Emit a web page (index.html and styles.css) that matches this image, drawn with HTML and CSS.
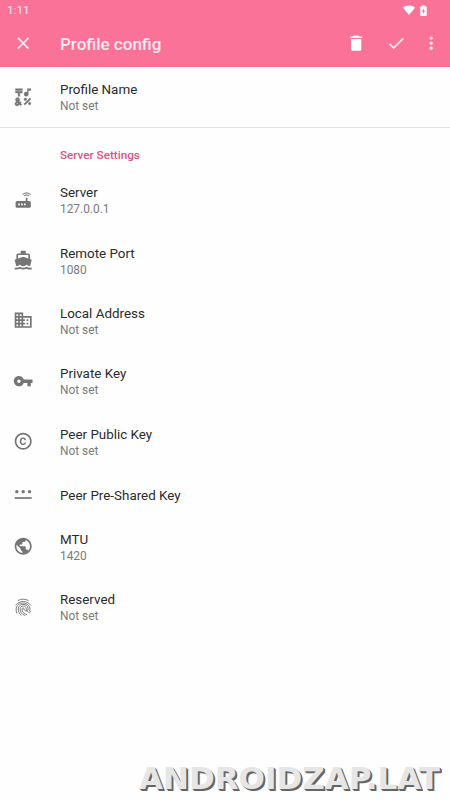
FILE: index.html
```html
<!DOCTYPE html>
<html lang="en">
<head>
<meta charset="utf-8">
<title>Profile config</title>
<link rel="stylesheet" href="styles.css">
</head>
<body>
<header class="top">
  <div class="status">
    <span class="clock">1:11</span>
    <svg class="wifi" viewBox="0 0 24 24"><path d="M12 22 0 7.500C3 4.500 7 3 12 3s9 1.500 12 4.500z"/></svg>
    <svg class="battery" viewBox="0 0 24 24"><path d="M15.670 4H14V2h-4v2H8.330C7.100 4 6 4.600 6 5.330v15.330C6 21.400 7.100 22 8.330 22h7.330c1.240 0 2.340-.600 2.340-1.330V5.330C18 4.600 16.900 4 15.670 4zM11 19v-4.500H9L13 8v4.500h2L11 19z"/></svg>
  </div>
  <div class="toolbar">
    <svg class="icon close" viewBox="0 0 24 24"><path d="M19 6.410 17.590 5 12 10.590 6.410 5 5 6.410 10.590 12 5 17.590 6.410 19 12 13.410 17.590 19 19 17.590 13.410 12z"/></svg>
    <h1>Profile config</h1>
    <svg class="icon trash" viewBox="0 0 24 24"><path d="M6 19c0 1.100.9 2 2 2h8c1.100 0 2-.9 2-2V7H6v12zM19 4h-3.500l-1-1h-5l-1 1H5v2h14V4z"/></svg>
    <svg class="icon check" viewBox="0 0 24 24"><path d="M9 16.170 4.830 12l-1.420 1.410L9 19 21 7l-1.410-1.410z"/></svg>
    <svg class="icon more" viewBox="0 0 24 24"><path d="M12 8c1.100 0 2-.9 2-2s-.9-2-2-2-2 .9-2 2 .9 2 2 2zm0 2c-1.100 0-2 .9-2 2s.9 2 2 2 2-.9 2-2-.9-2-2-2zm0 6c-1.100 0-2 .9-2 2s.9 2 2 2 2-.9 2-2-.9-2-2-2z"/></svg>
  </div>
</header>
<main>
  <section class="profile">
    <div class="row">
      <svg class="icon symbols" viewBox="0 0 24 24"><path d="M3 2h8v2H3zM3 5h8v2H8v4H6V7H3zM15.500 11c1.380 0 2.500-1.120 2.500-2.500V4h3V2h-4v4.510c-.420-.320-.930-.510-1.500-.510a2.500 2.500 0 0 0 0 5z"/><path d="m12.700 19.900 7.070-7.070 1.420 1.410-7.070 7.070z"/><circle cx="14.500" cy="14.500" r="1.500"/><circle cx="19.500" cy="19.500" r="1.500"/><path d="m9.740 18.430-1.410-1.410-.710.710-.740-.740.350-.350c.980-.980.980-2.560 0-3.540-.490-.490-1.130-.730-1.770-.730s-1.280.240-1.770.730c-.980.980-.980 2.560 0 3.540l.350.350-1.060 1.060c-.980.980-.980 2.560 0 3.540.5.490 1.140.730 1.780.730s1.280-.240 1.770-.730l1.060-1.060 1.410 1.410 1.410-1.410-1.410-1.410zM5.110 14.050c.05-.050.170-.150.350-.150s.300.100.350.150c.190.190.190.510 0 .710l-.350.350-.350-.350c-.190-.200-.190-.520 0-.710zm.350 5.780-.350.350c-.050.050-.170.150-.350.150s-.300-.100-.350-.150c-.190-.190-.190-.510 0-.710l1.060-1.060.740.740z"/></svg>
      <div class="text"><h2>Profile Name</h2><p>Not set</p></div>
    </div>
  </section>
  <section class="settings">
    <h3>Server Settings</h3>
    <div class="row">
      <svg class="icon" viewBox="0 0 24 24"><path d="m20.200 5.900.8-.8C19.600 3.700 17.800 3 16 3s-3.600.7-5 2.100l.8.800C13 4.800 14.500 4.200 16 4.200s3 .6 4.200 1.700zm-.9.800c-.9-.9-2.100-1.400-3.300-1.400s-2.400.5-3.300 1.400l.8.800c.7-.7 1.600-1 2.500-1s1.800.3 2.500 1zM19 13h-2V9h-2v4H5c-1.100 0-2 .9-2 2v4c0 1.100.9 2 2 2h14c1.100 0 2-.9 2-2v-4c0-1.100-.9-2-2-2zM8 18H6v-2h2zm3.500 0h-2v-2h2zm3.500 0h-2v-2h2z"/></svg>
      <div class="text"><h2>Server</h2><p>127.0.0.1</p></div>
    </div>
    <div class="row">
      <svg class="icon" viewBox="0 0 24 24"><path d="M20 21c-1.390 0-2.780-.470-4-1.320-2.440 1.710-5.560 1.710-8 0C6.780 20.530 5.390 21 4 21H2v2h2c1.380 0 2.740-.350 4-.990 2.520 1.290 5.480 1.290 8 0 1.260.650 2.620.990 4 .990h2v-2zM3.950 19H4c1.600 0 3.020-.880 4-2 .980 1.120 2.400 2 4 2s3.020-.880 4-2c.980 1.120 2.400 2 4 2h.050l1.890-6.680c.080-.260.060-.540-.060-.780s-.340-.420-.600-.500L20 10.620V6c0-1.100-.9-2-2-2h-3V1H9v3H6c-1.100 0-2 .9-2 2v4.620l-1.290.420c-.260.080-.480.260-.600.500s-.150.520-.060.780zM6 6h12v3.970L12 8 6 9.970z"/></svg>
      <div class="text"><h2>Remote Port</h2><p>1080</p></div>
    </div>
    <div class="row">
      <svg class="icon" viewBox="0 0 24 24"><path d="M12 7V3H2v18h20V7zM6 19H4v-2h2zm0-4H4v-2h2zm0-4H4V9h2zm0-4H4V5h2zm4 12H8v-2h2zm0-4H8v-2h2zm0-4H8V9h2zm0-4H8V5h2zm10 12h-8v-2h2v-2h-2v-2h2v-2h-2V9h8zm-2-8h-2v2h2zm0 4h-2v2h2z"/></svg>
      <div class="text"><h2>Local Address</h2><p>Not set</p></div>
    </div>
    <div class="row">
      <svg class="icon" viewBox="0 0 24 24"><path d="M12.650 10C11.830 7.670 9.610 6 7 6c-3.310 0-6 2.690-6 6s2.690 6 6 6c2.610 0 4.830-1.670 5.650-4H17v4h4v-4h2v-4zM7 14c-1.100 0-2-.9-2-2s.9-2 2-2 2 .9 2 2-.9 2-2 2z"/></svg>
      <div class="text"><h2>Private Key</h2><p>Not set</p></div>
    </div>
    <div class="row">
      <svg class="icon" viewBox="0 0 24 24"><path d="M10.080 10.860c.050-.330.160-.620.300-.870s.340-.460.590-.620c.240-.150.540-.220.910-.230.230.010.440.050.630.130.200.090.380.210.520.360s.250.330.340.530.130.420.140.640h1.790c-.020-.470-.110-.9-.280-1.290s-.4-.730-.7-1.010-.660-.5-1.080-.660-.880-.230-1.390-.230c-.650 0-1.220.110-1.700.340s-.880.530-1.200.920-.560.840-.710 1.360S8 11.290 8 11.870v.270c0 .580.080 1.120.230 1.640s.390.970.710 1.350.720.690 1.200.910c.480.220 1.050.340 1.700.340.470 0 .910-.080 1.320-.230s.770-.360 1.080-.630.560-.580.740-.940.290-.740.300-1.150h-1.790c-.010.210-.060.400-.150.580s-.210.330-.360.460-.320.230-.520.300c-.190.070-.390.090-.6.100-.360-.010-.660-.080-.890-.230-.250-.160-.450-.370-.590-.620s-.250-.550-.300-.880-.080-.670-.080-1v-.270c0-.350.030-.680.080-1.010zM12 2C6.480 2 2 6.480 2 12s4.480 10 10 10 10-4.480 10-10S17.520 2 12 2zm0 18c-4.410 0-8-3.590-8-8s3.590-8 8-8 8 3.590 8 8-3.590 8-8 8z"/></svg>
      <div class="text"><h2>Peer Public Key</h2><p>Not set</p></div>
    </div>
    <div class="row single">
      <svg class="icon" viewBox="0 0 24 24"><path d="M2 15.500h20v2H2z"/><circle cx="4.500" cy="9" r="2"/><circle cx="12" cy="9" r="2"/><circle cx="19.500" cy="9" r="2"/></svg>
      <div class="text"><h2>Peer Pre-Shared Key</h2></div>
    </div>
    <div class="row">
      <svg class="icon" viewBox="0 0 24 24"><path d="M12 2C6.480 2 2 6.480 2 12s4.480 10 10 10 10-4.480 10-10S17.520 2 12 2zm-1 17.930c-3.950-.490-7-3.850-7-7.930 0-.620.080-1.210.210-1.790L9 15v1c0 1.100.9 2 2 2zm6.900-2.540c-.260-.810-1-1.390-1.900-1.390h-1v-3c0-.550-.450-1-1-1H8v-2h2c.550 0 1-.450 1-1V7h2c1.100 0 2-.9 2-2v-.410c2.930 1.190 5 4.060 5 7.410 0 2.080-.8 3.970-2.100 5.390z"/></svg>
      <div class="text"><h2>MTU</h2><p>1420</p></div>
    </div>
    <div class="row">
      <svg class="icon finger" viewBox="0 0 24 24"><path d="M6 4C9.800 2 14.200 2 18 4M3.300 9.500C7 3.800 17 3.800 20.700 9.500M9.500 21.500C7.500 19.500 6.200 17.500 6.200 14c0-7 11.600-7 11.600 0 0 3-4.800 3-4.800 0 0-1.600-2.400-1.600-2.400 0 0 3.800 2.600 6 5.600 6.800M4.400 19c-1.200-3.500-1-7 .8-9C9 5.200 18.500 6.600 19.900 13c.2 1.300.1 2.200-.2 3.200M13.600 21.700c-3.200-1.200-5.200-4.200-5.200-7.700 0-4.500 7.200-4.500 7.200 0 0 3.900 3.700 4.600 5.200 3.500"/></svg>
      <div class="text"><h2>Reserved</h2><p>Not set</p></div>
    </div>
  </section>
</main>
<div class="watermark">ANDROIDZAP.LAT</div>
</body>
</html>
```

FILE: styles.css
```css
* { box-sizing: border-box; }
body {
  margin: 0;
  height: 800px;
  overflow: hidden;
  background: #fefefe;
  color: #2b2b2b;
  font-family: Roboto, sans-serif;
}
h1, h2, h3, p { margin: 0; font-weight: 400; }
svg { display: block; flex: none; fill: currentColor; }
.top { height: 67px; background: #fb7299; color: #ffe9ef; }
.status { display: flex; align-items: center; height: 20px; padding: 0 20px 0 7px; }
.clock { flex: 1; font-size: 11.800px; }
.wifi { width: 12px; height: 12px; margin-right: 2px; color: #fff; }
.battery { width: 13px; height: 13px; color: #fff; }
.toolbar { display: flex; align-items: center; height: 47px; padding: 0 8.400px 0 13px; }
.toolbar h1 { flex: 1; margin-left: 26.600px; font-size: 17px; font-weight: 500; line-height: 20px; }
.icon { width: 20.400px; height: 20.400px; }
.trash { color: #fff; margin-right: 19.600px; }
.check { margin-right: 14.600px; }
.profile { height: 60.500px; border-bottom: 1px solid #e2e2e2; }
.row { display: flex; align-items: center; height: 60.400px; padding-left: 13.200px; }
.row .icon { margin-right: 26.400px; color: #757575; }
.text { padding-top: 2.600px; }
.row h2 { font-size: 13.400px; line-height: 17px; }
.row p { font-size: 11.900px; line-height: 17px; color: #7b7b7b; }
.settings { padding-top: 19.700px; }
.settings h3 { height: 22.500px; padding-left: 60px; font-size: 11.700px; font-weight: 500; line-height: 16px; color: #df5384; }
.row.single { height: 44.600px; }
.row .symbols { stroke: currentColor; stroke-width: .5; }
.row .finger { fill: none; stroke: currentColor; stroke-width: 1.100; stroke-linecap: round; }
.watermark {
  position: absolute;
  right: 10px;
  bottom: 4px;
  font: bold 31px/36px "DejaVu Sans", sans-serif;
  color: #e6e6e6;
  text-shadow: 1px 1px #666, 2px 2px #666;
}
```
